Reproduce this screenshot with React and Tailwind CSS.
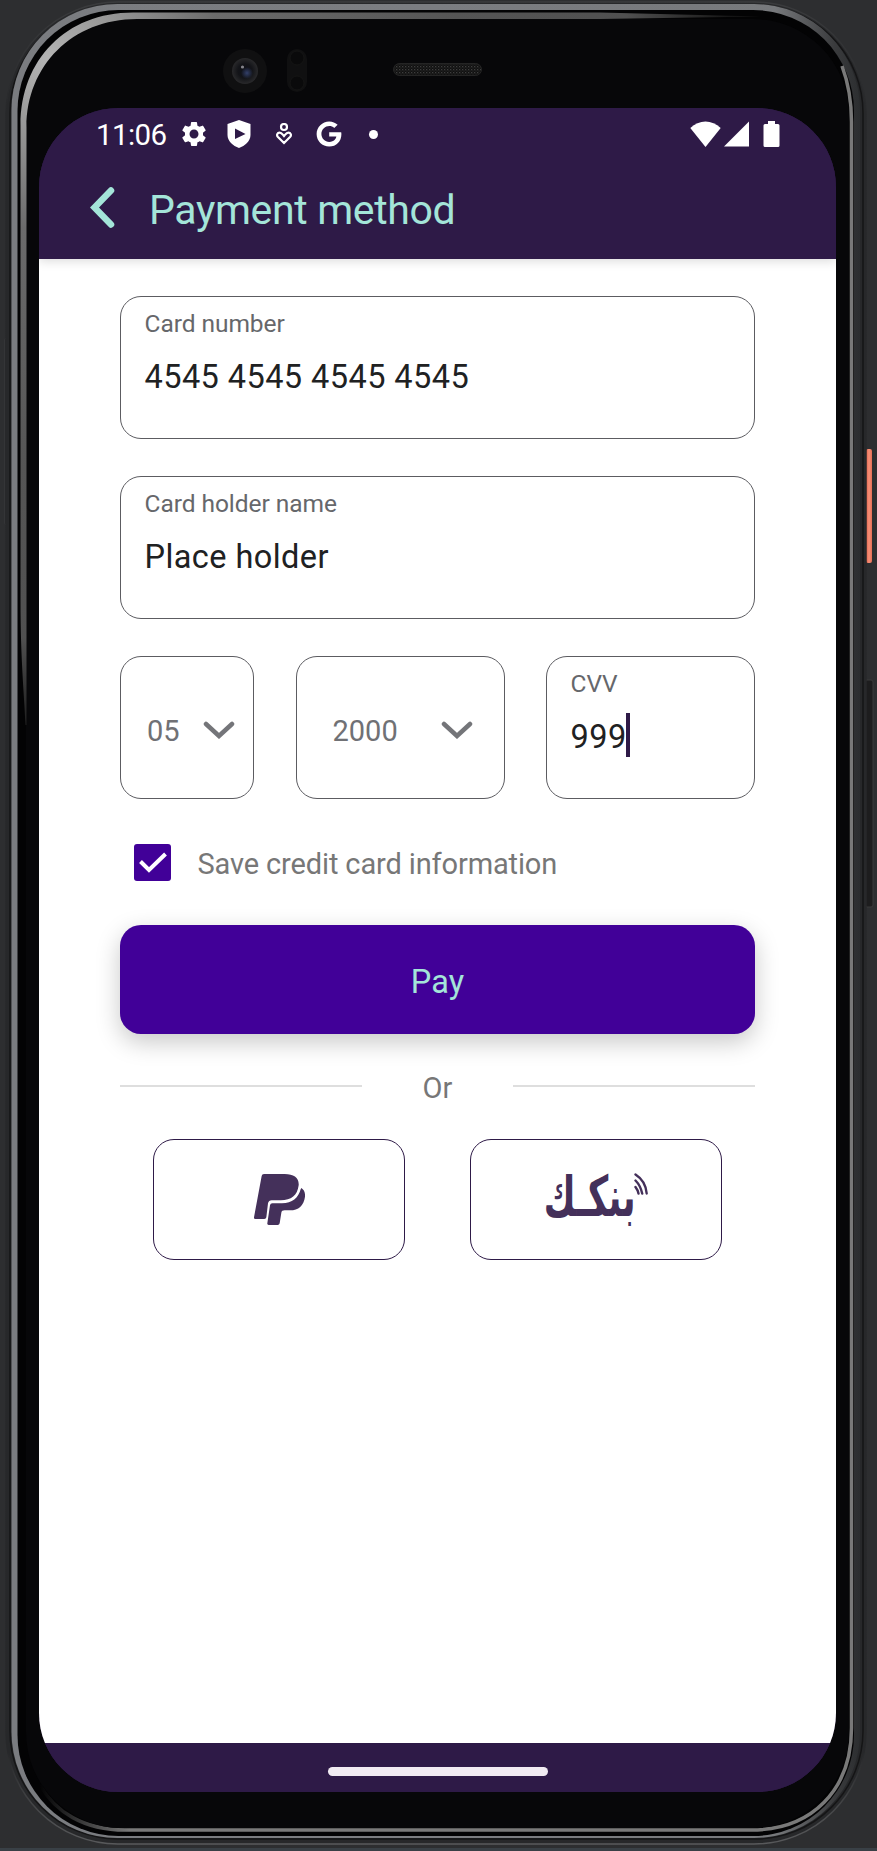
import { MdSettings } from "react-icons/md";
import { FaGoogle } from "react-icons/fa";

function DeviceFrame() {
  return (
    <svg className="absolute inset-0" width="877" height="1851" viewBox="0 0 877 1851" fill="none" aria-hidden="true">
      <defs>
        <linearGradient id="outerRail" x1="0" y1="0" x2="0" y2="1">
          <stop offset="0" stopColor="#3a3b3d" />
          <stop offset="0.06" stopColor="#27282a" />
          <stop offset="0.95" stopColor="#27282a" />
          <stop offset="1" stopColor="#58595b" />
        </linearGradient>
        <linearGradient id="rail" x1="0" y1="0" x2="1" y2="0">
          <stop offset="0" stopColor="#7a7c80" />
          <stop offset="0.5" stopColor="#7b7d81" />
          <stop offset="0.9" stopColor="#77797c" />
          <stop offset="0.97" stopColor="#3a3b3d" />
          <stop offset="1" stopColor="#2c2e30" />
        </linearGradient>
        <radialGradient id="lip" cx="50" cy="60" r="680" gradientUnits="userSpaceOnUse">
          <stop offset="0" stopColor="#b4b4b4" />
          <stop offset="0.1" stopColor="#989898" />
          <stop offset="0.25" stopColor="#6b6b6b" />
          <stop offset="0.6" stopColor="#555" />
          <stop offset="0.85" stopColor="#505050" />
          <stop offset="1" stopColor="#161616" />
        </radialGradient>
        <linearGradient id="lowerLip" x1="40" y1="0" x2="130" y2="0" gradientUnits="userSpaceOnUse">
          <stop offset="0" stopColor="#030304" />
          <stop offset="1" stopColor="#797979" />
        </linearGradient>
        <linearGradient id="power" x1="0" y1="0" x2="1" y2="0">
          <stop offset="0" stopColor="#e2614a" />
          <stop offset="0.5" stopColor="#f79077" />
          <stop offset="1" stopColor="#e56d55" />
        </linearGradient>
        <radialGradient id="lens">
          <stop offset="0" stopColor="#0e1018" />
          <stop offset="0.55" stopColor="#131418" />
          <stop offset="1" stopColor="#29292b" />
        </radialGradient>
        <radialGradient id="glint">
          <stop offset="0" stopColor="#33406a" />
          <stop offset="1" stopColor="#33406a" stopOpacity="0" />
        </radialGradient>
        <pattern id="mesh" width="3" height="3" patternUnits="userSpaceOnUse">
          <rect width="3" height="3" fill="#101010" />
          <rect width="1.3" height="1.3" fill="#3d3d3d" />
          <rect x="1.5" y="1.5" width="1" height="1" fill="#333" />
        </pattern>
      </defs>
      <rect width="877" height="1851" fill="#2d2e30" />
      <rect y="1848" width="877" height="3" fill="#394046" />
      <rect x="5" y="338" width="3" height="187" rx="2" fill="#1b1b1c" stroke="#434446" strokeWidth="0.7" />
      <rect x="865" y="680" width="8" height="227" rx="2" fill="#1d1d1e" stroke="#3a3a3a" strokeWidth="1" />
      <rect x="866" y="449" width="6" height="114" rx="2" fill="url(#power)" />
      <rect x="6" y="2" width="860" height="1842" rx="112" fill="#27282a" stroke="url(#outerRail)" strokeWidth="1.5" />
      <rect x="10" y="5" width="853" height="1834" rx="108" stroke="#151516" strokeWidth="1.5" />
      <rect x="11.500" y="4" width="848.500" height="1834" rx="106" fill="url(#rail)" />
      <rect x="17.500" y="10" width="836.500" height="1826" rx="101" fill="#030304" />
      <path d="M842 66C848 82 851.500 98 851.500 122V1728C851.500 1790 812 1830 751 1830H125C84 1830 55 1812 40 1785" stroke="url(#lowerLip)" strokeWidth="3.500" />
      <rect x="26" y="19" width="823" height="1809" rx="96" fill="#070709" />
      <path d="M25.500 725C24 690 20.500 660 20.500 600V125C20.500 60 66 12.500 133 12.500H600L760 16.500L600 19H137C72 19 26.500 66 26.500 127V725Z" fill="url(#lip)" />
      <circle cx="245" cy="71" r="22" fill="#101011" />
      <circle cx="245" cy="71" r="13" fill="url(#lens)" />
      <circle cx="247" cy="73" r="6" fill="url(#glint)" />
      <circle cx="242.500" cy="67" r="1.6" fill="#85858c" />
      <rect x="287" y="49" width="20" height="43" rx="10" fill="#101011" />
      <circle cx="297" cy="58" r="7" fill="#0a0a0b" stroke="#151515" />
      <circle cx="297" cy="83" r="7" fill="#0a0a0b" stroke="#151515" />
      <rect x="393.500" y="63.500" width="88" height="12" rx="6" fill="url(#mesh)" stroke="#242424" />
    </svg>
  );
}

function ShieldPlayIcon() {
  return (
    <svg width="24" height="28" viewBox="0 0 24 28" aria-hidden="true">
      <path fill="#fff" fillRule="evenodd" d="M12 0L23.500 4V15C23.500 21 18 26 12 28C6 26 .5 21 .5 15V4ZM8 8.500V19L18.500 14Z" />
    </svg>
  );
}

function HeartPersonIcon() {
  return (
    <svg width="16" height="22" viewBox="0 0 16 22" fill="none" stroke="#fff" strokeWidth="2.2" aria-hidden="true">
      <circle cx="8" cy="4" r="3" />
      <path d="M8 20L2 14C.2 12 1.300 9.700 3.600 9.700C5.600 9.700 6.200 11 8 13C9.800 11 10.400 9.700 12.400 9.700C14.700 9.700 15.800 12 14 14Z" />
    </svg>
  );
}

function StatusBar() {
  return (
    <div className="flex h-[52px] items-center pl-[57px] pr-[56px] text-white">
      <span className="w-[82px] whitespace-nowrap pt-[2px] text-[29.500px] leading-[34px] tracking-[-0.6px]">11:06</span>
      <MdSettings className="ml-[1px] size-[30px]" />
      <span className="ml-[18px]"><ShieldPlayIcon /></span>
      <span className="ml-[25px]"><HeartPersonIcon /></span>
      <FaGoogle className="ml-[24px] size-[26px]" />
      <span className="ml-[27px] size-[9px] rounded-full bg-white" />
      <div className="ml-auto flex items-center">
        <svg width="31" height="26" viewBox="0 0 31 26" fill="#fff" aria-hidden="true">
          <path d="M15.500 26L.3 7C9-1.800 22-1.800 30.700 7Z" />
        </svg>
        <svg className="ml-[3px]" width="25" height="26" viewBox="0 0 25 26" fill="#fff" aria-hidden="true">
          <path d="M25 .5V25.500H0Z" />
        </svg>
        <svg className="ml-[14px]" width="17" height="26" viewBox="0 0 17 26" fill="#fff" aria-hidden="true">
          <path d="M5 0H12V3H15Q16.500 3 16.500 4.500V24.500Q16.500 26 15 26H2Q.5 26 .5 24.500V4.500Q.5 3 2 3H5Z" />
        </svg>
      </div>
    </div>
  );
}

function Field({ label, children, className = "" }) {
  return (
    <div className={"h-[143px] rounded-[21px] border border-[#5c5c61] pl-[23.500px] pt-[13px] " + className}>
      <div className="text-[24.500px] leading-[28px] tracking-[-0.05px] text-[#66676b]">{label}</div>
      <div className="mt-[19px] flex h-[40px] items-center text-[32.500px] leading-[40px] tracking-[0.43px] text-[#202122]">{children}</div>
    </div>
  );
}

function Select({ value, className }) {
  return (
    <div className={"flex h-[143px] items-center rounded-[21px] border border-[#5c5c61] text-[29px] leading-[34px] text-[#707175] " + className}>
      <span className="pt-[7px]">{value}</span>
      <svg className="mt-[5px]" width="32" height="18" viewBox="0 0 32 18" fill="none" stroke="#747579" strokeWidth="4.500" strokeLinecap="round" aria-hidden="true">
        <path d="M3 3L16 15L29 3" />
      </svg>
    </div>
  );
}

function PaypalLogo() {
  return (
    <svg width="51" height="51" viewBox="0 0 153 153" fill="#44305a" aria-label="PayPal">
      <path d="M23 6Q24 0 30 0H92C120 0 136 12 134 34C130 65 112 79 80 79H53Q44 79 42 88L37 130Q36 135 31 135H4Q-1 135 0 130Z" />
      <path d="M142 42C150 47 154 56 153 68C149 95 134 109 108 109H92Q83 109 82 116L77 148Q76 153 71 153H44Q39 153 40 148L48 94Q49 88 55 88H84C115 87 133 72 140 46Z" />
    </svg>
  );
}

function BankakLogo() {
  return (
    <div className="relative flex h-[54px] w-[103px] items-center justify-center text-[#44305a]">
      <span dir="rtl" className="mb-[6px] mr-[13px] origin-center scale-x-[0.81] scale-y-[1.3] whitespace-nowrap font-['DejaVu_Sans',sans-serif] text-[43px] font-bold leading-[54px]">بنكـك</span>
      <svg className="absolute right-0 top-[1px]" width="14" height="22" viewBox="0 0 14 22" fill="none" stroke="#44305a" strokeWidth="2.400" strokeLinecap="round" aria-hidden="true">
        <path d="M1.500 1.500C7 5 12 12 12.700 20.500M1.500 7.500C5 11 7 15 8.200 20.500M1.500 14C3 16 4 18 4.500 20.500" />
      </svg>
    </div>
  );
}

export default function App() {
  return (
    <div className="relative h-[1851px] w-[877px] overflow-hidden bg-[#2d2e30] pl-[39px] pt-[108px] font-[Roboto,sans-serif]">
      <DeviceFrame />
      <div className="relative flex h-[1684px] w-[797px] flex-col overflow-hidden rounded-[79px] bg-[#2e1a47]">
        <header className="relative z-10 h-[150.500px] shrink-0 bg-[#2e1a47] shadow-[0_2px_10px_rgba(0,0,0,0.15)]">
          <StatusBar />
          <div className="flex items-start pl-[51px] pt-[26px]">
            <svg className="mt-[1px]" width="26" height="42" viewBox="0 0 26 42" fill="none" stroke="#a4e5d9" strokeWidth="6.500" strokeLinecap="round" aria-hidden="true">
              <path d="M21 3.500L4.500 20.500L21 37.500" />
            </svg>
            <h1 className="ml-[33px] text-[41px] leading-[48px] tracking-[-0.35px] text-[#a4e5d9]">Payment method</h1>
          </div>
        </header>

        <main className="flex flex-1 flex-col bg-white px-[81px] pt-[37px]">
          <Field label="Card number">4545 4545 4545 4545</Field>
          <Field label="Card holder name" className="mt-[37px]">Place holder</Field>
          <div className="mt-[37px] flex justify-between">
            <Select value="05" className="w-[134px] justify-between pl-[26px] pr-[18px]" />
            <Select value="2000" className="w-[209px] justify-between pl-[36px] pr-[31px]" />
            <Field label="CVV" className="w-[209px]">
              999
              <span className="-ml-[1px] -mt-[3px] h-[44px] w-[4px] bg-[#2e1a47]" />
            </Field>
          </div>

          <div className="ml-[14px] mt-[45px] flex h-[37px] items-center">
            <span className="flex size-[37px] items-center justify-center rounded-[3px] bg-[#410098]">
              <svg width="28" height="21" viewBox="0 0 28 21" fill="none" stroke="#fff" strokeWidth="4" aria-hidden="true">
                <path d="M1.500 9.500L10 18L26.500 2" />
              </svg>
            </span>
            <span className="ml-[26.500px] pt-[4px] text-[29px] leading-[34px] tracking-[-0.13px] text-[#777]">Save credit card information</span>
          </div>

          <button className="mt-[44px] h-[109px] shrink-0 rounded-[21px] bg-[#410098] pt-[6px] text-[32.500px] leading-[40px] tracking-[0.1px] text-[#a4e5d9] shadow-[0_8px_24px_rgba(0,0,0,0.22)]">
            Pay
          </button>

          <div className="mt-[36px] flex h-[34px] items-center justify-between text-[29px] leading-[34px] text-[#777]">
            <span className="-mt-[2px] h-[2px] w-[242px] bg-[#dedede]" />
            <span className="pt-[2px]">Or</span>
            <span className="-mt-[2px] h-[2px] w-[242px] bg-[#dedede]" />
          </div>

          <div className="mt-[35px] flex justify-between px-[33px]">
            <button aria-label="PayPal" className="flex h-[121px] w-[252px] items-center justify-center rounded-[21px] border border-[#2e1a47]">
              <PaypalLogo />
            </button>
            <button className="flex h-[121px] w-[252px] items-center justify-center rounded-[21px] border border-[#2e1a47]">
              <BankakLogo />
            </button>
          </div>
        </main>

        <footer className="flex h-[49px] shrink-0 items-start justify-center bg-[#2e1a47] pt-[24px]">
          <span className="h-[9px] w-[220px] rounded-full bg-[#f1ebf2]" />
        </footer>
      </div>
    </div>
  );
}
